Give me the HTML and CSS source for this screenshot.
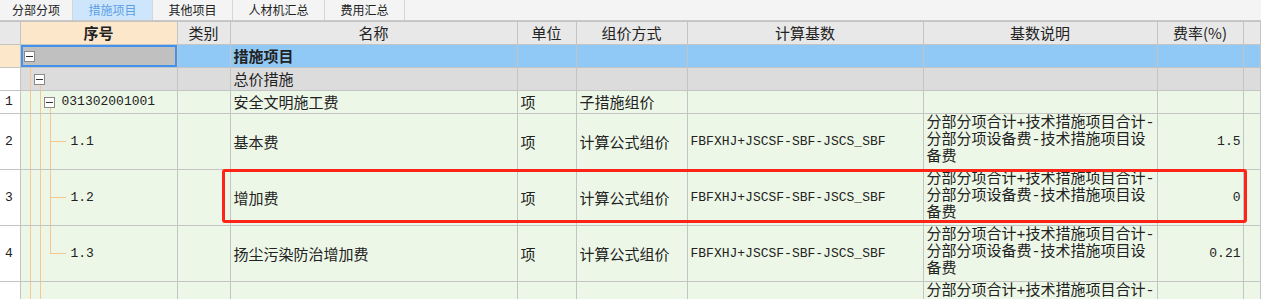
FILE: index.html
```html
<!DOCTYPE html>
<html lang="zh-CN">
<head>
    <meta charset="UTF-8">
    <title>措施项目</title>
    <link rel="stylesheet" href="styles.css">
</head>
<body>
    <div class="tabs">
        <div class="tab">分部分项</div>
        <div class="tab active">措施项目</div>
        <div class="tab">其他项目</div>
        <div class="tab">人材机汇总</div>
        <div class="tab">费用汇总</div>
    </div>
    <div class="grid-wrap">
        <table class="grid">
            <colgroup>
                <col class="c-rn">
                <col class="c-seq">
                <col class="c-type">
                <col class="c-name">
                <col class="c-unit">
                <col class="c-way">
                <col class="c-base">
                <col class="c-desc">
                <col class="c-rate">
                <col>
            </colgroup>
            <thead>
                <tr>
                    <th class="rn"></th>
                    <th class="seq-head">序号</th>
                    <th>类别</th>
                    <th>名称</th>
                    <th>单位</th>
                    <th>组价方式</th>
                    <th>计算基数</th>
                    <th>基数说明</th>
                    <th>费率(%)</th>
                    <th></th>
                </tr>
            </thead>
            <tbody>
                <tr class="row-root">
                    <td class="rn"></td>
                    <td class="seq t0 selected"><div class="node"><span class="box"></span></div></td>
                    <td></td>
                    <td class="bold">措施项目</td>
                    <td></td><td></td><td></td><td></td><td></td><td></td>
                </tr>
                <tr class="row-group">
                    <td class="rn"></td>
                    <td class="seq t1"><div class="node"><span class="box"></span></div></td>
                    <td></td>
                    <td>总价措施</td>
                    <td></td><td></td><td></td><td></td><td></td><td></td>
                </tr>
                <tr class="row-item">
                    <td class="rn">1</td>
                    <td class="seq t2"><div class="node"><span class="box"></span><span class="code">031302001001</span></div></td>
                    <td></td>
                    <td>安全文明施工费</td>
                    <td>项</td>
                    <td>子措施组价</td>
                    <td></td><td></td><td></td><td></td>
                </tr>
                <tr class="row-item tall">
                    <td class="rn">2</td>
                    <td class="seq t3"><div class="node leaf"><span class="code">1.1</span></div></td>
                    <td></td>
                    <td>基本费</td>
                    <td>项</td>
                    <td>计算公式组价</td>
                    <td class="code">FBFXHJ+JSCSF-SBF-JSCS_SBF</td>
                    <td class="desc">分部分项合计+技术措施项目合计-<br>分部分项设备费-技术措施项目设<br>备费</td>
                    <td class="rate">1.5</td>
                    <td></td>
                </tr>
                <tr class="row-item tall">
                    <td class="rn">3</td>
                    <td class="seq t3"><div class="node leaf"><span class="code">1.2</span></div></td>
                    <td></td>
                    <td>增加费</td>
                    <td>项</td>
                    <td>计算公式组价</td>
                    <td class="code">FBFXHJ+JSCSF-SBF-JSCS_SBF</td>
                    <td class="desc">分部分项合计+技术措施项目合计-<br>分部分项设备费-技术措施项目设<br>备费</td>
                    <td class="rate">0</td>
                    <td></td>
                </tr>
                <tr class="row-item tall">
                    <td class="rn">4</td>
                    <td class="seq t3-last"><div class="node leaf"><span class="code">1.3</span></div></td>
                    <td></td>
                    <td>扬尘污染防治增加费</td>
                    <td>项</td>
                    <td>计算公式组价</td>
                    <td class="code">FBFXHJ+JSCSF-SBF-JSCS_SBF</td>
                    <td class="desc">分部分项合计+技术措施项目合计-<br>分部分项设备费-技术措施项目设<br>备费</td>
                    <td class="rate">0.21</td>
                    <td></td>
                </tr>
                <tr class="row-item tall">
                    <td class="rn"></td>
                    <td class="seq t-cont"></td>
                    <td></td>
                    <td></td>
                    <td></td>
                    <td></td>
                    <td></td>
                    <td class="desc">分部分项合计+技术措施项目合计-<br>分部分项设备费-技术措施项目设<br>备费</td>
                    <td class="rate"></td>
                    <td></td>
                </tr>
            </tbody>
        </table>
        <div class="highlight"></div>
    </div>
</body>
</html>
```

FILE: styles.css
```css
body {
    margin: 0;
    font-family: "Noto Sans CJK SC", sans-serif;
    font-size: 15px;
    color: #222;
    background-color: #fff;
    overflow: hidden;
}

/* tab strip */
.tabs {
    display: flex;
    height: 20px;
    background-color: #f4f4f4;
    border-bottom: 1px solid #c8c8c8;
}

.tab {
    font-size: 12px;
    line-height: 20px;
    text-align: center;
    border-right: 1px solid #d6d6d6;
    box-sizing: border-box;
}

.tab:nth-child(1) { width: 73px; }
.tab:nth-child(2) { width: 80px; }
.tab:nth-child(3) { width: 80px; }
.tab:nth-child(4) { width: 92px; }
.tab:nth-child(5) { width: 80px; }

.tab.active {
    background-color: #cde6fb;
    color: #5d9fe4;
}

/* grid */
.grid-wrap {
    position: relative;
}

.grid {
    border-collapse: collapse;
    table-layout: fixed;
    width: 1261px;
}

.c-rn { width: 20px; }
.c-seq { width: 157px; }
.c-type { width: 53px; }
.c-name { width: 287px; }
.c-unit { width: 59px; }
.c-way { width: 111px; }
.c-base { width: 236px; }
.c-desc { width: 234px; }
.c-rate { width: 86px; }

.grid th, .grid td {
    border: 1px solid #c4c4c4;
    padding: 0 3px;
    height: 22px;
    white-space: nowrap;
    overflow: hidden;
    text-align: left;
    font-weight: normal;
    line-height: 18px;
}

.grid th {
    background-color: #e8e8e8;
    text-align: center;
}

.grid th.rn {
    border-left: none;
}

.grid th.seq-head {
    background-color: #fde7cb;
    font-weight: bold;
}

.grid td.rn {
    background-color: #fff;
    border-left: none;
    font-family: "Liberation Mono", monospace;
    font-size: 13px;
    padding-left: 5px;
}

.row-root td {
    background-color: #90c8f6;
}

.row-root td.rn {
    background-color: #fde7cb;
}

.row-group td {
    background-color: #dcdcdc;
}

.row-item td {
    background-color: #edf7e7;
}

.grid .tall td {
    height: 54px;
}

.grid td.bold {
    font-weight: bold;
}

.code {
    font-family: "Liberation Mono", monospace;
    font-size: 13px;
}

.grid td.desc {
    font-family: "Liberation Mono", "Noto Sans CJK SC", monospace;
    font-size: 15px;
    line-height: 17px;
    vertical-align: top;
    padding-top: 1px;
}

.grid td.rate {
    text-align: right;
    font-family: "Liberation Mono", monospace;
    font-size: 13px;
    padding-right: 2px;
}

/* tree column */
.grid td.seq {
    padding: 0;
    --tl: #f7c78c;
}

.grid td.seq.selected {
    background-color: #c0c0c0;
    box-shadow: inset 0 0 0 2px #4292ec;
}

.node {
    display: flex;
    align-items: center;
    height: 100%;
}

.box {
    width: 9px;
    height: 9px;
    border: 1px solid #8a8a8a;
    background-color: #fff;
    display: flex;
    align-items: center;
    justify-content: center;
    margin-right: 7px;
}

.box::after {
    content: "";
    width: 7px;
    height: 1px;
    background-color: #333;
}

.t0 .node { padding-left: 3px; }
.t1 .node { padding-left: 13px; }
.t2 .node { padding-left: 23px; }
.node.leaf { padding-left: 50px; }

.row-group td.t1 {
    background:
        linear-gradient(var(--tl), var(--tl)) 9px 0 / 1px 100% no-repeat,
        linear-gradient(var(--tl), var(--tl)) 19px 100% / 1px 50% no-repeat,
        #dcdcdc;
}

.row-item td.t2 {
    background:
        linear-gradient(var(--tl), var(--tl)) 9px 0 / 1px 100% no-repeat,
        linear-gradient(var(--tl), var(--tl)) 19px 0 / 1px 100% no-repeat,
        linear-gradient(var(--tl), var(--tl)) 29px 100% / 1px 50% no-repeat,
        #edf7e7;
}

.row-item td.t3 {
    background:
        linear-gradient(var(--tl), var(--tl)) 9px 0 / 1px 100% no-repeat,
        linear-gradient(var(--tl), var(--tl)) 19px 0 / 1px 100% no-repeat,
        linear-gradient(var(--tl), var(--tl)) 29px 0 / 1px 100% no-repeat,
        linear-gradient(var(--tl), var(--tl)) 29px 50% / 16px 1px no-repeat,
        #edf7e7;
}

.row-item td.t3-last {
    background:
        linear-gradient(var(--tl), var(--tl)) 9px 0 / 1px 100% no-repeat,
        linear-gradient(var(--tl), var(--tl)) 19px 0 / 1px 100% no-repeat,
        linear-gradient(var(--tl), var(--tl)) 29px 0 / 1px 50% no-repeat,
        linear-gradient(var(--tl), var(--tl)) 29px 50% / 16px 1px no-repeat,
        #edf7e7;
}

.row-item td.t-cont {
    background:
        linear-gradient(var(--tl), var(--tl)) 9px 0 / 1px 100% no-repeat,
        linear-gradient(var(--tl), var(--tl)) 19px 0 / 1px 100% no-repeat,
        #edf7e7;
}

/* red callout round row 3 */
.highlight {
    position: absolute;
    left: 222px;
    top: 148px;
    width: 1019px;
    height: 48px;
    border: 3px solid #ff2418;
    border-radius: 3px;
    pointer-events: none;
}
```
